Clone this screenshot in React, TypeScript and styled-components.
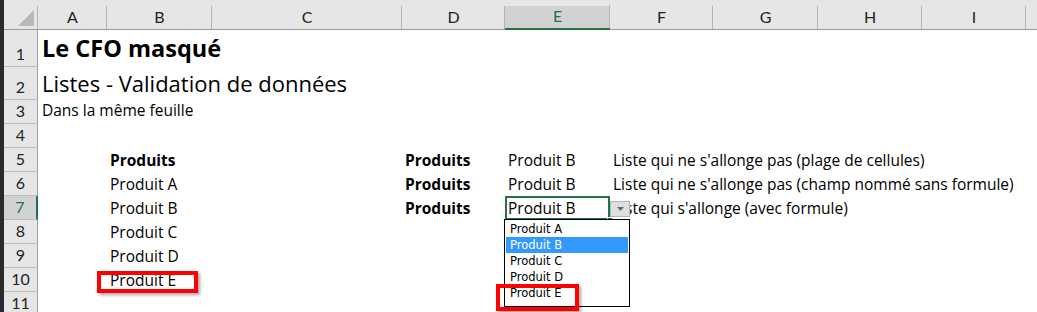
import React from 'react';
import styled, { createGlobalStyle, css } from 'styled-components';

const GREEN = '#217346';

const GlobalStyle = createGlobalStyle`
  *, *::before, *::after { box-sizing: border-box; }
  html, body { margin: 0; padding: 0; background: #fff; }
  body { font-family: Lato, "Liberation Sans", sans-serif; color: #000; overflow: hidden; }
`;

const Window = styled.div`
  display: flex;
  width: 1037px;
  height: 312px;
  overflow: hidden;
  background: #fff;
`;

const FrameEdge = styled.div`
  flex: 0 0 4px;
  background: #2b2b2b;
`;

const Sheet = styled.div`
  flex: 1;
  display: grid;
  grid-template-columns: 34px 69px 105px 190px 103px 105px 103px 105px 104px 104px 60px;
  grid-template-rows: 30px 37px 33px repeat(9, 24px);
`;

const headerSeparator = 'linear-gradient(#b4b4b4, #b4b4b4) right bottom / 1px 23px no-repeat';

const Corner = styled.div`
  display: flex;
  align-items: flex-end;
  justify-content: flex-end;
  padding: 0 4px 3px 0;
  background: ${headerSeparator}, #e6e6e6;
  border-bottom: 1px solid #9b9b9b;
`;

const ColHeader = styled.div<{ $active?: boolean }>`
  display: flex;
  align-items: flex-end;
  justify-content: center;
  padding-bottom: 4px;
  font-size: 16px;
  line-height: 1;
  color: ${(p) => (p.$active ? GREEN : '#222')};
  background: ${headerSeparator},
    linear-gradient(#e6e6e6 0 6px, ${(p) => (p.$active ? '#d2d2d2' : '#e6e6e6')} 6px);
  border-bottom: ${(p) => (p.$active ? `2px solid ${GREEN}` : '1px solid #9b9b9b')};
`;

const RowHeader = styled.div<{ $active?: boolean }>`
  display: flex;
  align-items: flex-end;
  justify-content: center;
  padding-bottom: 4px;
  font-size: 16px;
  line-height: 1;
  color: ${(p) => (p.$active ? GREEN : '#222')};
  background: ${(p) => (p.$active ? '#d2d2d2' : '#e6e6e6')};
  border-bottom: 1px solid #bdbdbd;
  border-right: ${(p) => (p.$active ? `2px solid ${GREEN}` : '1px solid #a0a0a0')};
`;

type Kind = 'title' | 'subtitle' | 'note' | 'body';

const kindStyles: Record<Kind, ReturnType<typeof css>> = {
  title: css`font-size: 23.5px; padding-bottom: 7px; padding-left: 4px;`,
  subtitle: css`font-size: 22px; padding-bottom: 6px; padding-left: 4px;`,
  note: css`font-size: 15.5px; padding-bottom: 6px; padding-left: 4px;`,
  body: css`font-size: 15.5px; padding-bottom: 4px; padding-left: 3px;`,
};

const Cell = styled.div<{ $kind: Kind; $bold?: boolean; $selected?: boolean }>`
  position: relative;
  display: flex;
  align-items: flex-end;
  min-width: 0;
  white-space: nowrap;
  overflow: visible;
  font-family: "Open Sans", Lato, sans-serif;
  line-height: 1;
  font-weight: ${(p) => (p.$bold ? 700 : 400)};
  ${(p) => kindStyles[p.$kind]}
  ${(p) => p.$selected && css`box-shadow: inset 2px 2px 0 ${GREEN}, inset -2px -2px 0 ${GREEN};`}
`;

const FillHandle = styled.span`
  position: absolute;
  right: -3px;
  bottom: -3px;
  width: 6px;
  height: 6px;
  background: ${GREEN};
  border: 1px solid #fff;
  z-index: 4;
`;

const DropButton = styled.span`
  position: absolute;
  left: 100%;
  top: 5px;
  width: 20px;
  height: 16px;
  display: flex;
  align-items: center;
  justify-content: center;
  background: #dfdfdf;
  border: 1px solid #b5b5b5;
  z-index: 5;
`;

const ListBox = styled.div`
  position: absolute;
  left: -1px;
  top: 23px;
  width: 126px;
  padding: 1px 1px 5px 1px;
  background: #fff;
  border: 1px solid #000;
  z-index: 5;
`;

const ListItem = styled.div<{ $selected?: boolean }>`
  position: relative;
  height: 16px;
  padding-left: 4px;
  font-family: "DejaVu Sans", "Liberation Sans", sans-serif;
  font-size: 11.5px;
  line-height: 16px;
  font-weight: 400;
  color: ${(p) => (p.$selected ? '#fff' : '#000')};
  background: ${(p) => (p.$selected ? '#3399ff' : 'transparent')};
`;

const RedBox = styled.span<{ $left: number; $top: number; $w: number; $h: number }>`
  position: absolute;
  left: ${(p) => p.$left}px;
  top: ${(p) => p.$top}px;
  width: ${(p) => p.$w}px;
  height: ${(p) => p.$h}px;
  border: 4px solid #ff0000;
  box-shadow: 2px 2px 3px rgba(0, 0, 0, 0.35);
  pointer-events: none;
  z-index: 6;
`;

const COLS = ['A', 'B', 'C', 'D', 'E', 'F', 'G', 'H', 'I', 'J'];

interface CellDef {
  text: string;
  bold?: boolean;
}
interface RowDef {
  n: number;
  kind: Kind;
  cells: Partial<Record<string, CellDef>>;
}

const PRODUITS: CellDef = { text: 'Produits', bold: true };
const PB: CellDef = { text: 'Produit B' };

const ROWS: RowDef[] = [
  { n: 1, kind: 'title', cells: { A: { text: 'Le CFO masqué', bold: true } } },
  { n: 2, kind: 'subtitle', cells: { A: { text: 'Listes - Validation de données' } } },
  { n: 3, kind: 'note', cells: { A: { text: 'Dans la même feuille' } } },
  { n: 4, kind: 'body', cells: {} },
  {
    n: 5,
    kind: 'body',
    cells: { B: PRODUITS, D: PRODUITS, E: PB, F: { text: "Liste qui ne s'allonge pas (plage de cellules)" } },
  },
  {
    n: 6,
    kind: 'body',
    cells: {
      B: { text: 'Produit A' },
      D: PRODUITS,
      E: PB,
      F: { text: "Liste qui ne s'allonge pas (champ nommé sans formule)" },
    },
  },
  {
    n: 7,
    kind: 'body',
    cells: { B: PB, D: PRODUITS, E: PB, F: { text: "Liste qui s'allonge (avec formule)" } },
  },
  { n: 8, kind: 'body', cells: { B: { text: 'Produit C' } } },
  { n: 9, kind: 'body', cells: { B: { text: 'Produit D' } } },
  { n: 10, kind: 'body', cells: { B: { text: 'Produit E' } } },
  { n: 11, kind: 'body', cells: {} },
];

const OPTIONS = ['Produit A', 'Produit B', 'Produit C', 'Produit D', 'Produit E'];

const Dropdown: React.FC = () => (
  <>
    <FillHandle />
    <DropButton>
      <svg width="7" height="4" viewBox="0 0 7 4">
        <path d="M0 0h7L3.5 4z" fill="#6a6a6a" />
      </svg>
    </DropButton>
    <ListBox>
      {OPTIONS.map((o) => (
        <ListItem key={o} $selected={o === 'Produit B'}>
          {o}
          {o === 'Produit E' && <RedBox $left={-10} $top={-1} $w={83} $h={27} />}
        </ListItem>
      ))}
    </ListBox>
  </>
);

export default function App() {
  return (
    <>
      <GlobalStyle />
      <Window>
        <FrameEdge />
        <Sheet>
          <Corner>
            <svg width="16" height="16" viewBox="0 0 16 16">
              <path d="M0 16L16 0V16Z" fill="#b9b9b9" />
            </svg>
          </Corner>
          {COLS.map((c) => (
            <ColHeader key={c} $active={c === 'E'}>
              {c === 'J' ? '' : c}
            </ColHeader>
          ))}
          {ROWS.map((r) => (
            <React.Fragment key={r.n}>
              <RowHeader $active={r.n === 7}>{r.n}</RowHeader>
              {COLS.map((c) => {
                const def = r.cells[c];
                const isSel = r.n === 7 && c === 'E';
                return (
                  <Cell key={c} $kind={r.kind} $bold={def?.bold} $selected={isSel}>
                    {def?.text}
                    {isSel && <Dropdown />}
                    {r.n === 10 && c === 'B' && <RedBox $left={-10} $top={3} $w={101} $h={22} />}
                  </Cell>
                );
              })}
            </React.Fragment>
          ))}
        </Sheet>
      </Window>
    </>
  );
}
